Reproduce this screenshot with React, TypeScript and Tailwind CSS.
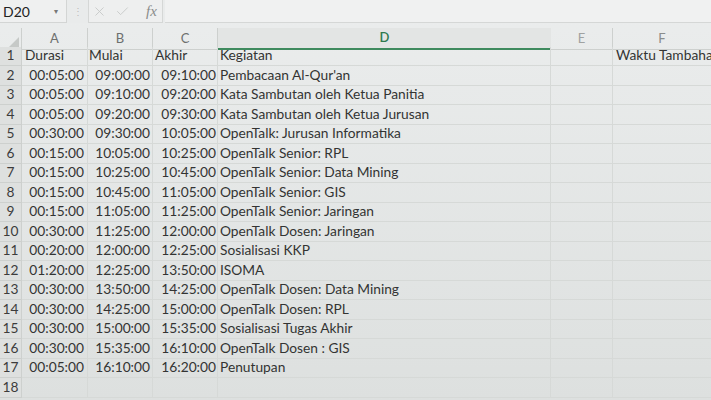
import { X, Check } from "lucide-react";

const rows: [string, string, string, string][] = [
  ["00:05:00", "09:00:00", "09:10:00", "Pembacaan Al-Qur'an"],
  ["00:05:00", "09:10:00", "09:20:00", "Kata Sambutan oleh Ketua Panitia"],
  ["00:05:00", "09:20:00", "09:30:00", "Kata Sambutan oleh Ketua Jurusan"],
  ["00:30:00", "09:30:00", "10:05:00", "OpenTalk: Jurusan Informatika"],
  ["00:15:00", "10:05:00", "10:25:00", "OpenTalk Senior: RPL"],
  ["00:15:00", "10:25:00", "10:45:00", "OpenTalk Senior: Data Mining"],
  ["00:15:00", "10:45:00", "11:05:00", "OpenTalk Senior: GIS"],
  ["00:15:00", "11:05:00", "11:25:00", "OpenTalk Senior: Jaringan"],
  ["00:30:00", "11:25:00", "12:00:00", "OpenTalk Dosen: Jaringan"],
  ["00:20:00", "12:00:00", "12:25:00", "Sosialisasi KKP"],
  ["01:20:00", "12:25:00", "13:50:00", "ISOMA"],
  ["00:30:00", "13:50:00", "14:25:00", "OpenTalk Dosen: Data Mining"],
  ["00:30:00", "14:25:00", "15:00:00", "OpenTalk Dosen: RPL"],
  ["00:30:00", "15:00:00", "15:35:00", "Sosialisasi Tugas Akhir"],
  ["00:30:00", "15:35:00", "16:10:00", "OpenTalk Dosen : GIS"],
  ["00:05:00", "16:10:00", "16:20:00", "Penutupan"],
];

const cols = "grid grid-cols-[22px_66px_65px_65px_333px_62px_1fr]";
const cell = "h-[19.5px] border-b border-r border-[#d6d9d7] flex items-center overflow-hidden whitespace-nowrap";
const num = "h-[19.5px] border-b border-r border-[#cdd0ce] flex items-center justify-center text-[#3c3c3c] bg-[#dee0df]";

export default function App() {
  return (
    <div className="w-[711px] h-[400px] overflow-hidden bg-gradient-to-b from-[#ebeded] to-[#dde0df] text-[13.75px] text-[#333433] font-['Lato','Open_Sans',sans-serif]">
      {/* formula bar */}
      <div className="flex h-[23px] items-stretch bg-[#e9ebeb]">
        <div className="w-[67px] bg-[#eff0f0] border-r border-b border-[#d3d5d4] flex items-center justify-between pl-[3px] pr-1 text-[14px] text-[#222]">
          <span>D20</span>
          <span className="text-[8px] text-[#777] mr-1">▾</span>
        </div>
        <div className="w-[21px] flex items-center justify-center text-[#bbb] text-[10px]">⋮</div>
        <div className="w-[75px] bg-[#eeefef] border-x border-b border-[#d5d7d6] flex items-center gap-[8px] pl-[3px] text-[#c6c8c7]">
          <X size={15} strokeWidth={1.4} />
          <Check size={15} strokeWidth={1.4} />
          <span className="ml-[8px] font-['Liberation_Serif',serif] italic text-[#8a8c8b] text-[15px]">fx</span>
        </div>
        <div className="flex-1 bg-[#f0f1f1] border-b border-[#d5d7d6] ml-[2px]" />
      </div>
      <div className="h-[5px]" />
      {/* column headers */}
      <div className={`${cols} h-[18.5px] text-[#6d6f6e] text-[13px]`}>
        <div className="border-r border-b border-[#cdd0ce] flex items-end justify-end p-[2px]">
          <div className="w-0 h-0 border-l-[10px] border-l-transparent border-b-[10px] border-b-[#c6c9c7]" />
        </div>
        <div className="border-r border-b border-[#cdd0ce] flex items-center justify-center">A</div>
        <div className="border-r border-b border-[#cdd0ce] flex items-center justify-center">B</div>
        <div className="border-r border-b border-[#cdd0ce] flex items-center justify-center">C</div>
        <div className="bg-[#e3e5e4] border-b-2 border-[#3f8a5e] flex items-center justify-center text-[#2f7a4e] font-semibold">D</div>
        <div className="border-r border-b border-[#cdd0ce] flex items-center justify-center text-[#a0a2a1]">E</div>
        <div className="border-b border-[#cdd0ce] flex items-center justify-center text-[#8a8c8b]">F</div>
      </div>
      {/* header row */}
      <div className={cols}>
        <div className={num}>1</div>
        <div className={`${cell} pl-[3px]`}>Durasi</div>
        <div className={`${cell} pl-[1px]`}>Mulai</div>
        <div className={`${cell} pl-[2px]`}>Akhir</div>
        <div className={`${cell} pl-[2px]`}>Kegiatan</div>
        <div className={cell} />
        <div className={`${cell} pl-[3px] border-r-0`}>Waktu Tambahan</div>
      </div>
      {rows.map((r, i) => (
        <div key={i} className={cols}>
          <div className={num}>{i + 2}</div>
          <div className={`${cell} justify-end pr-[3px]`}>{r[0]}</div>
          <div className={`${cell} justify-end pr-[2px]`}>{r[1]}</div>
          <div className={`${cell} justify-end pr-[1px]`}>{r[2]}</div>
          <div className={`${cell} pl-[2px]`}>{r[3]}</div>
          <div className={cell} />
          <div className={`${cell} border-r-0`} />
        </div>
      ))}
      <div className={cols}>
        <div className={num}>18</div>
        <div className={cell} />
        <div className={cell} />
        <div className={cell} />
        <div className={cell} />
        <div className={cell} />
        <div className={`${cell} border-r-0`} />
      </div>
    </div>
  );
}
